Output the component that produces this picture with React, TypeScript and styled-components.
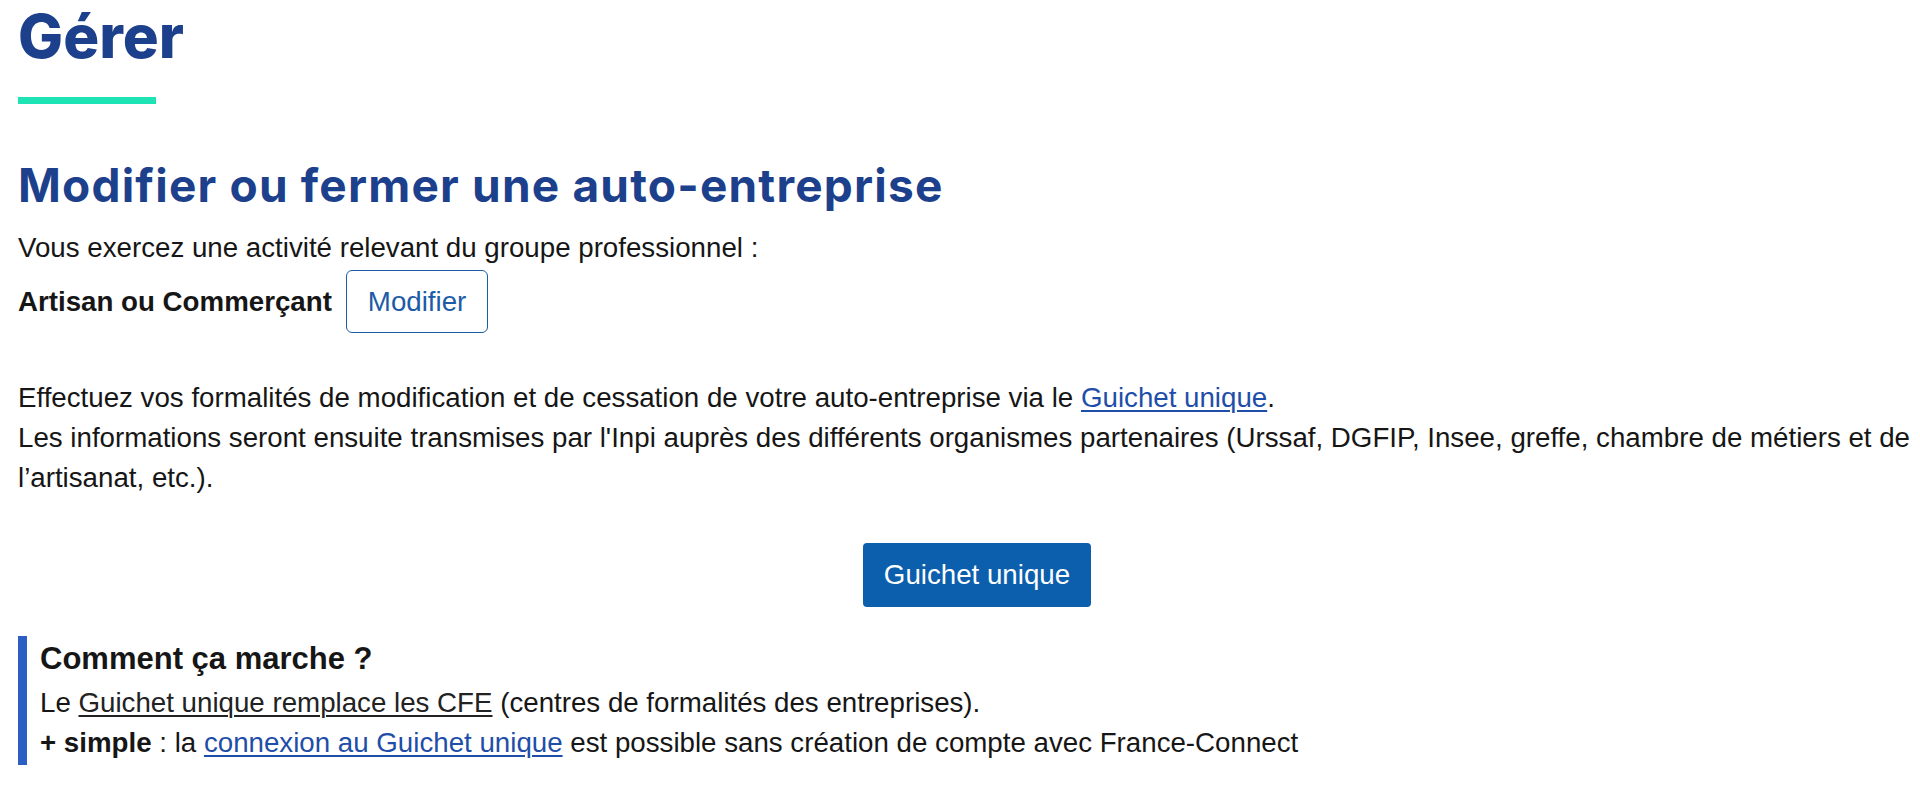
import React from 'react'
import styled, { createGlobalStyle } from 'styled-components'

const GlobalStyle = createGlobalStyle`
  html, body {
    margin: 0;
    padding: 0;
    background: #ffffff;
    overflow: hidden;
  }
  body {
    font-family: "Liberation Sans", Arial, sans-serif;
    color: #161616;
  }
`

const Page = styled.main`
  width: 1918px;
  padding-left: 18px;
  font-size: 27.7px;
  line-height: 40px;
`

const Title = styled.h1`
  margin: 0;
  font-family: Inter, "Noto Sans", sans-serif;
  font-weight: 800;
  font-size: 60px;
  line-height: 72px;
  color: #1d408c;
`

const Accent = styled.div`
  margin-top: 25px;
  width: 138px;
  height: 7px;
  background: #1ee3b5;
`

const Subtitle = styled.h2`
  margin: 54px 0 15px;
  font-family: Inter, "Noto Sans", sans-serif;
  font-weight: 700;
  font-size: 46px;
  line-height: 55px;
  letter-spacing: 1.2px;
  color: #1d408c;
`

const Text = styled.p<{ $mt?: number }>`
  margin: ${({ $mt }) => $mt ?? 0}px 0 0;
`

const ProfileRow = styled.div`
  display: flex;
  align-items: center;
  gap: 14px;
  margin-top: 2px;
`

const Strong = styled.strong`
  font-weight: 700;
`

const OutlineButton = styled.button`
  font-family: inherit;
  font-size: 27.7px;
  line-height: 40px;
  padding: 10.5px 21px;
  color: #1c5ca6;
  background: #ffffff;
  border: 1.5px solid #1c5ca6;
  border-radius: 6px;
  cursor: pointer;
`

const Link = styled.a<{ $tone?: 'blue' | 'dark' }>`
  color: ${({ $tone }) => ($tone === 'dark' ? '#222222' : '#1f4ea8')};
  text-decoration: underline;
  text-underline-offset: 3px;
  text-decoration-thickness: 1.5px;
`

const Centered = styled.div`
  display: flex;
  justify-content: center;
  margin-top: 45px;
`

const PrimaryButton = styled.a`
  display: inline-block;
  font-size: 27.7px;
  line-height: 40px;
  padding: 12px 21px;
  color: #ffffff;
  background: #0c5fad;
  border-radius: 4px;
  text-decoration: none;
`

const Callout = styled.section`
  margin-top: 29px;
  padding: 6px 0 2px 13px;
  border-left: 9px solid #2c5ec4;
`

const CalloutTitle = styled.h3`
  margin: 0 0 7px;
  font-size: 31px;
  line-height: 34px;
  font-weight: 700;
  color: #161616;
`

const App = () => (
  <>
    <GlobalStyle />
    <Page>
      <Title>Gérer</Title>
      <Accent />
      <Subtitle>Modifier ou fermer une auto-entreprise</Subtitle>
      <Text>Vous exercez une activité relevant du groupe professionnel :</Text>
      <ProfileRow>
        <Strong>Artisan ou Commerçant</Strong>
        <OutlineButton type="button">Modifier</OutlineButton>
      </ProfileRow>
      <Text $mt={45}>
        Effectuez vos formalités de modification et de cessation de votre auto-entreprise via le{' '}
        <Link href="#">Guichet unique</Link>.
        <br />
        Les informations seront ensuite transmises par l'Inpi auprès des différents organismes partenaires (Urssaf,
        DGFIP, Insee, greffe, chambre de métiers et de l’artisanat, etc.).
      </Text>
      <Centered>
        <PrimaryButton href="#">Guichet unique</PrimaryButton>
      </Centered>
      <Callout>
        <CalloutTitle>Comment ça marche ?</CalloutTitle>
        <Text>
          Le <Link href="#" $tone="dark">Guichet unique remplace les CFE</Link> (centres de formalités des entreprises).
        </Text>
        <Text>
          <Strong>+ simple</Strong> : la <Link href="#">connexion au Guichet unique</Link> est possible sans création de
          compte avec France-Connect
        </Text>
      </Callout>
    </Page>
  </>
)

export default App
